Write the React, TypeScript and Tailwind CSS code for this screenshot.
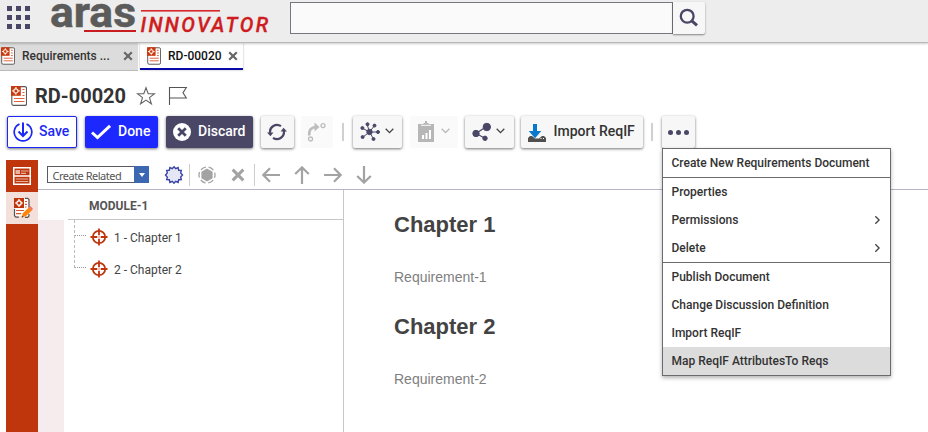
import React from 'react';

const INK = '#4a4766';

function DocIcon({ className }: { className: string }) {
  return (
    <svg viewBox="0 0 16 20" className={className} fill="none">
      <rect x=".8" y=".6" width="14.7" height="18.8" rx="1.6" fill="#fff" stroke="#5c5655" strokeWidth="1.1" />
      <rect x="0" y="0" width="9.8" height="9.8" fill="#c73a10" />
      <circle cx="4.9" cy="4.9" r="2.1" stroke="#ffe9e0" strokeWidth="1.2" />
      <path d="M4.9 1.1v2M4.9 6.7v2M1.1 4.9h2M6.7 4.9h2" stroke="#ffe9e0" strokeWidth="1.2" />
      <path d="M11.4 3.5h2.1M11.4 6.5h2.1M11.4 9.5h2.1M3 12.5h10.5M3 15.5h10.5" stroke="#e0623c" strokeWidth="1.1" />
    </svg>
  );
}

function Cross({ className }: { className: string }) {
  return (
    <svg viewBox="0 0 10 10" className={className} fill="none">
      <path d="M1.2 1.2l7.6 7.6M8.8 1.2L1.2 8.8" stroke="currentColor" strokeWidth="2.2" />
    </svg>
  );
}

function Chevron({ className }: { className: string }) {
  return (
    <svg viewBox="0 0 9 6" className={className} fill="none">
      <path d="M.7.8l3.8 3.8L8.3.8" stroke="currentColor" strokeWidth="1.3" />
    </svg>
  );
}

function Target() {
  return (
    <svg viewBox="0 0 18 18" className="size-[18px] shrink-0" fill="none" stroke="#c0360c">
      <circle cx="9" cy="9" r="6.2" strokeWidth="1.8" />
      <path d="M9 .5v6.8M9 10.7v6.8M.5 9h6.8M10.7 9h6.8" strokeWidth="1.8" />
      <path d="M8.4 9h1.2" strokeWidth="1.2" />
    </svg>
  );
}

function Logo() {
  return (
    <svg viewBox="0 0 222 42" className="ml-[19px] h-[42px] w-[222px] shrink-0 overflow-visible">
      <text x="1" y="27.3" fontFamily="Roboto, sans-serif" fontWeight="700" fontSize="43" fill="#5b5b5b" stroke="#5b5b5b" strokeWidth=".5" textLength="86" lengthAdjust="spacingAndGlyphs">aras</text>
      <rect x="35" y="30" width="52" height="2" fill="#c81e22" />
      <rect x="92" y="10" width="79" height="1.6" fill="#d6282c" />
      <text x="91.5" y="32" fontFamily="Roboto, sans-serif" fontWeight="500" fontStyle="italic" fontSize="21" fill="#cf1c20" stroke="#cf1c20" strokeWidth=".3" letterSpacing="2.4" textLength="130" lengthAdjust="spacingAndGlyphs">INNOVATOR</text>
    </svg>
  );
}

function Arrow({ turn, className = '' }: { turn: string; className?: string }) {
  return (
    <svg viewBox="0 0 18 18" className={`size-[18px] shrink-0 ${turn} ${className}`} fill="none" stroke="#a3a3a3" strokeWidth="2.2">
      <path d="M18 9H1.5M8 2.2L1.4 9 8 15.8" />
    </svg>
  );
}

const raised = 'flex h-8 shrink-0 items-center rounded-[2px] shadow-[0_1px_3px_rgba(0,0,0,0.55)]';
const flat = 'flex h-8 shrink-0 items-center rounded-[2px] bg-[#fafafa]';

function MenuItem({ label, more, active }: { label: string; more?: boolean; active?: boolean }) {
  return (
    <div className={`flex h-7 items-center justify-between pl-[8.5px] pr-[8px] ${active ? 'bg-[#dcdcdc]' : ''}`}>
      <span>{label}</span>
      {more && <Chevron className="h-[6px] w-[9px] -rotate-90 text-[#444]" />}
    </div>
  );
}

export default function App() {
  return (
    <div className="relative flex h-[432px] w-[928px] flex-col overflow-hidden bg-white font-['Roboto',sans-serif] text-[12px] text-[#333]">
      <header className="z-10 flex h-[43px] shrink-0 items-start border-b border-[#b9b9b9] bg-[#ededed] shadow-[0_1px_2px_rgba(0,0,0,0.2)]">
        <div className="ml-[7px] mt-[6px] grid shrink-0 grid-cols-3 gap-x-[4px] gap-y-[4px]">
          {Array.from({ length: 9 }, (_, i) => (
            <i key={i} className="h-[5px] w-[5px] bg-[#4a4766]" />
          ))}
        </div>
        <Logo />
        <div className="ml-[19px] mt-[2px] flex h-8 shrink-0">
          <div className="w-[383px] border border-[#77757f] bg-[#fafafa]" />
          <div className="flex w-8 items-center justify-center rounded-r-[2px] bg-[#f7f7f7] shadow-[0_1px_2px_rgba(0,0,0,0.45)]">
            <svg viewBox="0 0 20 20" className="size-5" fill="none" stroke={INK}>
              <circle cx="8.2" cy="8.2" r="6.4" strokeWidth="2.3" />
              <path d="M12.8 12.8l5.2 4.6" strokeWidth="3" />
            </svg>
          </div>
        </div>
      </header>

      <div className="flex h-[28px] shrink-0 gap-[2px]">
        <div className="flex h-[28px] w-[138px] items-center border-b border-[#bbb] bg-[#dcdcdc] pb-[1px]">
          <DocIcon className="ml-px h-[18px] w-[14px]" />
          <span className="ml-[7px] w-[101px] font-medium">Requirements ...</span>
          <Cross className="size-[10px] text-[#666]" />
        </div>
        <div className="flex h-[27px] w-[103px] items-center border-b-2 border-[#0909a8] shadow-[0_0_2px_rgba(0,0,0,0.3)]">
          <DocIcon className="ml-[7px] h-[18px] w-[14px]" />
          <span className="ml-[7px] w-[60px] font-medium text-[#111]">RD-00020</span>
          <Cross className="mt-px size-[10px] text-[#666]" />
        </div>
      </div>

      <div className="flex h-[45px] shrink-0 items-center pt-[5px]">
        <DocIcon className="ml-[11px] h-5 w-4" />
        <h1 className="ml-[8px] w-[101px] text-[20px] font-bold leading-6">RD-00020</h1>
        <svg viewBox="0 0 20 20" className="-mt-px size-[20px]" fill="none" stroke="#666" strokeWidth="1.1">
          <path d="M10 1.7l2.2 6h6.3l-5 3.9 1.9 6.2-5.4-3.7-5.4 3.7 1.9-6.2-5-3.9h6.3z" />
        </svg>
        <svg viewBox="0 0 20 20" className="ml-[12px] size-5" fill="none" stroke="#555" strokeWidth="1.1">
          <path d="M1.5 1V19M1.5 1.5H18.3l-3.3 5.2 3.3 5.3H1.5" />
        </svg>
      </div>

      <div className="flex h-[44px] shrink-0 text-[14px] font-medium">
        <div className={`${raised} ml-[7px] w-[70px] border border-[#1c28f5] bg-white text-[#1c28f5]`}>
          <svg viewBox="0 0 20 20" className="ml-[5px] size-5" fill="none" stroke="#1c28f5">
            <path d="M6.5 2A8.8 8.8 0 1 0 13.5 2" strokeWidth="1.7" />
            <path d="M10 .5V14M5.5 9.5L10 14l4.5-4.5" strokeWidth="2" />
          </svg>
          <span className="-mt-px ml-[6px]">Save</span>
        </div>
        <div className={`${raised} ml-[8px] w-[73px] bg-[#1c28ff] text-white`}>
          <svg viewBox="0 0 20 16" className="ml-[6px] h-4 w-5" fill="none" stroke="#fff" strokeWidth="3"><path d="M1 8.5l5.5 5L19 1.8" /></svg>
          <span className="-mt-px ml-[7px]">Done</span>
        </div>
        <div className={`${raised} ml-[8px] w-[87px] bg-[#4a4766] text-white`}>
          <svg viewBox="0 0 18 18" className="ml-[7px] size-[18px]"><circle cx="9" cy="9" r="9" fill="#fff" /><path d="M5.2 5.2l7.6 7.6M12.8 5.2l-7.6 7.6" stroke={INK} strokeWidth="2.7" /></svg>
          <span className="-mt-px ml-[7px]">Discard</span>
        </div>
        <div className={`${raised} ml-[8px] w-[33px] justify-center bg-[#f7f7f7]`}>
          <svg viewBox="0 0 20 18" className="-ml-px h-[18px] w-5" fill="none" stroke={INK} strokeWidth="2.2">
            <path d="M3.1 10A7 7 0 0 1 14 3.2M16.9 8A7 7 0 0 1 6 14.8" />
            <path d="M0 9.6h6.4L3.5 13.2zM13.6 8.4H20L16.5 4.8z" fill={INK} stroke="none" />
          </svg>
        </div>
        <div className={`${flat} ml-[7px] w-[32px] justify-center`}>
          <svg viewBox="0 0 20 20" className="-ml-[2px] size-5" fill="none" stroke="#bdbdbd">
            <path d="M3.3 13.5C2.6 8 5.5 5 10.2 5" strokeWidth="2.6" />
            <path d="M8.5 .5l5 4.5-5 4.5z" fill="#bdbdbd" stroke="none" />
            <circle cx="17" cy="3.6" r="2" strokeWidth="1.3" /><circle cx="4.5" cy="17" r="2" strokeWidth="1.3" />
          </svg>
        </div>
        <div className="ml-[9px] mt-[7px] h-[18px] w-[2px] shrink-0 bg-[#d0d0d0]" />
        <div className={`${raised} ml-[9px] w-[49px] bg-[#f7f7f7]`}>
          <svg viewBox="0 0 20 20" className="ml-[7px] size-5 shrink-0" stroke={INK} fill={INK}>
            <path d="M9.5 10L7 2M9.5 10L2 6M9.5 10L3 15M9.5 10l4 7M9.5 10H18M9.5 10L14.5 3.6" strokeWidth="1" />
            <circle cx="9.5" cy="10" r="2.7" /><circle cx="7.5" cy="2.2" r="1.5" /><circle cx="2.4" cy="6" r="1.5" /><circle cx="2.6" cy="15" r="1.5" /><circle cx="14.5" cy="3.6" r="1.5" /><circle cx="18" cy="10" r="1.5" /><circle cx="13.5" cy="17" r="1.5" />
          </svg>
          <Chevron className="ml-[5px] mb-[3px] h-[6px] w-[9px] text-[#444]" />
        </div>
        <div className={`${flat} ml-[8px] w-[48px]`}>
          <svg viewBox="0 0 18 22" className="ml-[7px] h-[22px] w-[18px] shrink-0">
            <path d="M1 3h5l1-1h1V0h2v2h1l1 1h5v18H1z" fill="#b7b7b7" />
            <path d="M4 4.3h10" stroke="#fafafa" strokeWidth="1" /><path d="M6 18v-4M9.5 18v-6M13 18V9" stroke="#fff" strokeWidth="2" />
          </svg>
          <Chevron className="ml-[6px] mb-[3px] h-[6px] w-[9px] text-[#b7b7b7]" />
        </div>
        <div className={`${raised} ml-[7px] w-[49px] bg-[#f7f7f7]`}>
          <svg viewBox="0 0 20 20" className="ml-[7px] size-5 shrink-0" fill={INK} stroke={INK}>
            <path d="M14.5 4.5L4 11.5l9 4.8" strokeWidth="1.2" fill="none" /><circle cx="14.8" cy="5" r="3.7" /><circle cx="4" cy="11.5" r="3.2" /><circle cx="13" cy="16.3" r="2.2" />
          </svg>
          <Chevron className="ml-[4px] mb-[3px] h-[6px] w-[9px] text-[#444]" />
        </div>
        <div className={`${raised} ml-[7px] w-[122px] bg-[#f7f7f7]`}>
          <svg viewBox="0 0 18 18" className="ml-[7px] mt-px size-[18px] shrink-0">
            <path d="M2 12h2l3 2.5h4l3-2.5h2l2 2v4H0v-4z" fill="#4f4f4f" /><path d="M12.5 14.5h1M15 14.5h1" stroke="#fff" strokeWidth="1.2" />
            <path d="M5 0h4v7h4.3L7 14.3.8 7H5z" fill="#0878cf" />
          </svg>
          <span className="-mt-px ml-[7.5px] whitespace-nowrap">Import ReqIF</span>
        </div>
        <div className="ml-[8px] mt-[7px] h-[18px] w-[2px] shrink-0 bg-[#d0d0d0]" />
        <div className={`${raised} ml-[9px] w-[33px] justify-center gap-[3px] bg-[#f7f7f7]`}>
          <i className="size-[5px] rounded-full bg-[#4a4766]" />
          <i className="size-[5px] rounded-full bg-[#4a4766]" />
          <i className="size-[5px] rounded-full bg-[#4a4766]" />
        </div>
      </div>

      <main className="flex min-h-0 flex-1 pl-[6px]">
        <aside className="w-8 shrink-0 bg-[#c0360c]">
          <div className="flex h-8 items-center justify-center">
            <svg viewBox="0 0 18 18" className="size-[18px]" fill="none">
              <path d="M.75.75h16.5v16.5H.75zM1 9h16" stroke="#fff" strokeWidth="1.5" />
              <path d="M8 4h7.5M8 6.3h5M2.8 12h12.4M2.8 14.5h12.4" stroke="#e9b29e" strokeWidth="1.2" />
              <path d="M2.5 3h4.5v4H2.5z" fill="#e9b29e" />
            </svg>
          </div>
          <div className="flex h-8 items-center justify-center bg-[#f3e0da]">
            <svg viewBox="0 0 20 22" className="ml-[2px] h-[22px] w-5" fill="none">
              <path d="M11 2h4v17H2v-7z" fill="#fff" />
              <path d="M12 1.3h2.7l1.3 1.3v8M1.5 12v6.7l1.4 1.5h3M12 20.3h2.7l1.3-1.4V17" stroke="#555" strokeWidth="1.2" />
              <rect x="1" y="1" width="10" height="10" fill="#c0360c" />
              <circle cx="6" cy="6" r="2.2" stroke="#fff" strokeWidth="1.3" /><path d="M6 2v2M6 8v2M2 6h2M8 6h2" stroke="#fff" strokeWidth="1.2" />
              <path d="M12 4.5h2M12 7.3h2M12 10h1.5M3 13.5h8M3 16.6h5" stroke="#d9562f" strokeWidth="1.2" />
              <path d="M8.8 20.4l1-4.1 6-5.7 3 3-6 5.7z" fill="#ff850a" /><path d="M15.8 10.6l1.6-1.6 2.6 2.9-1.5 1.5z" fill="#ef7160" /><path d="M8.6 20.6l.5-2 1.5 1.4z" fill="#444" />
            </svg>
          </div>
        </aside>

        <div className="flex min-w-0 flex-1 flex-col">
          <div className="flex h-[30px] shrink-0 items-center border-b border-[#b4b5c5]">
            <div className="ml-[9px] flex h-[17px] w-[102px] shrink-0 border border-[#585a64] font-['Noto_Sans',sans-serif] text-[11px]">
              <span className="w-[86px] whitespace-nowrap pl-[4.5px] leading-[17px] tracking-[-0.5px] text-[#555]">Create Related</span>
              <span className="-my-px -mr-px flex w-[15px] items-center justify-center bg-[#3b68b1]">
                <svg viewBox="0 0 6 4" className="h-[4px] w-[6px]"><path d="M0 0h6L3 4z" fill="#fff" /></svg>
              </span>
            </div>
            <svg viewBox="0 0 20 20" className="ml-[15px] size-5 shrink-0" fill="#e5e7f6" stroke="#3943a2" strokeWidth="1.4">
              <path d="M10 1.8l1.7 1.9 2.4-1.1.6 2.6 2.6.1-.6 2.6 1.8 2.1-1.8 2.1.6 2.6-2.6.1-.6 2.6-2.4-1.1L10 18.2l-1.7-1.9-2.4 1.1-.6-2.6-2.6-.1.6-2.6L1.5 10l1.8-2.1-.6-2.6 2.6-.1.6-2.6 2.4 1.1z" />
            </svg>
            <i className="ml-[5px] h-[22px] w-px bg-[#ccc]" />
            <svg viewBox="0 0 18 18" className="ml-[8px] size-[18px] shrink-0" fill="none" stroke="#a3a3a3">
              <path d="M9 3.2l5 2.8v6l-5 2.8L4 12V6z" fill="#a3a3a3" stroke="#a3a3a3" strokeWidth="1.2" />
              <circle cx="9" cy="9" r="8" strokeWidth="1.3" strokeDasharray="5.6 2.78" strokeDashoffset="2.8" />
            </svg>
            <Cross className="ml-[15px] size-[14px] text-[#a3a3a3]" />
            <i className="ml-[9px] h-[22px] w-px bg-[#ccc]" />
            <Arrow turn="rotate-0" className="ml-[7px]" />
            <Arrow turn="rotate-90" className="ml-[13px]" />
            <Arrow turn="rotate-180" className="ml-[13px]" />
            <Arrow turn="-rotate-90" className="ml-[13px]" />
          </div>

          <div className="flex min-h-0 flex-1">
            <div className="flex w-[306px] shrink-0 flex-col border-r border-[#c6c6cb]">
              <div className="ml-[30px] h-[30px] shrink-0 border-b border-[#c6c6c6] pl-[21px] pt-[8px] font-bold leading-[17px] text-[#555]">MODULE-1</div>
              <div className="flex flex-1">
                <div className="w-[26px] bg-[#f6ecee]" />
                <div className="ml-[10px] flex h-[48px] w-3 flex-col border-l border-dashed border-[#bbb]">
                  <div className="h-[16px] border-b border-dotted border-[#999]" />
                  <div className="h-[32px] border-b border-dotted border-[#999]" />
                </div>
                <div className="ml-[4px] flex flex-col pt-px">
                  {['1 - Chapter 1', '2 - Chapter 2'].map((label) => (
                    <div key={label} className="flex h-8 items-center gap-[6px] text-[#444]">
                      <Target />
                      <span className="mt-[1px]">{label}</span>
                    </div>
                  ))}
                </div>
              </div>
            </div>
            <article className="pl-[50px] pt-[21px] font-['Liberation_Sans',Arial,sans-serif] text-[#434343]">
              <h2 className="text-[22px] font-bold leading-[28px]">Chapter 1</h2>
              <p className="mt-[29px] text-[14px] leading-[18px] text-[#808080]">Requirement-1</p>
              <h2 className="mt-[27px] text-[22px] font-bold leading-[28px]">Chapter 2</h2>
              <p className="mt-[29px] text-[14px] leading-[18px] text-[#808080]">Requirement-2</p>
            </article>
          </div>
        </div>
      </main>

      <div className="absolute left-[662px] top-[148px] z-20 w-[229px] border border-[#6b6b6f] bg-white font-medium text-[#333] shadow-[0_2px_4px_rgba(0,0,0,0.3)]">
        <MenuItem label="Create New Requirements Document" />
        <div className="border-t border-[#6b6b6f]">
          <MenuItem label="Properties" />
          <MenuItem label="Permissions" more />
          <MenuItem label="Delete" more />
        </div>
        <div className="border-t border-[#6b6b6f]">
          <MenuItem label="Publish Document" />
          <MenuItem label="Change Discussion Definition" />
          <MenuItem label="Import ReqIF" />
          <MenuItem label="Map ReqIF AttributesTo Reqs" active />
        </div>
      </div>
    </div>
  );
}
